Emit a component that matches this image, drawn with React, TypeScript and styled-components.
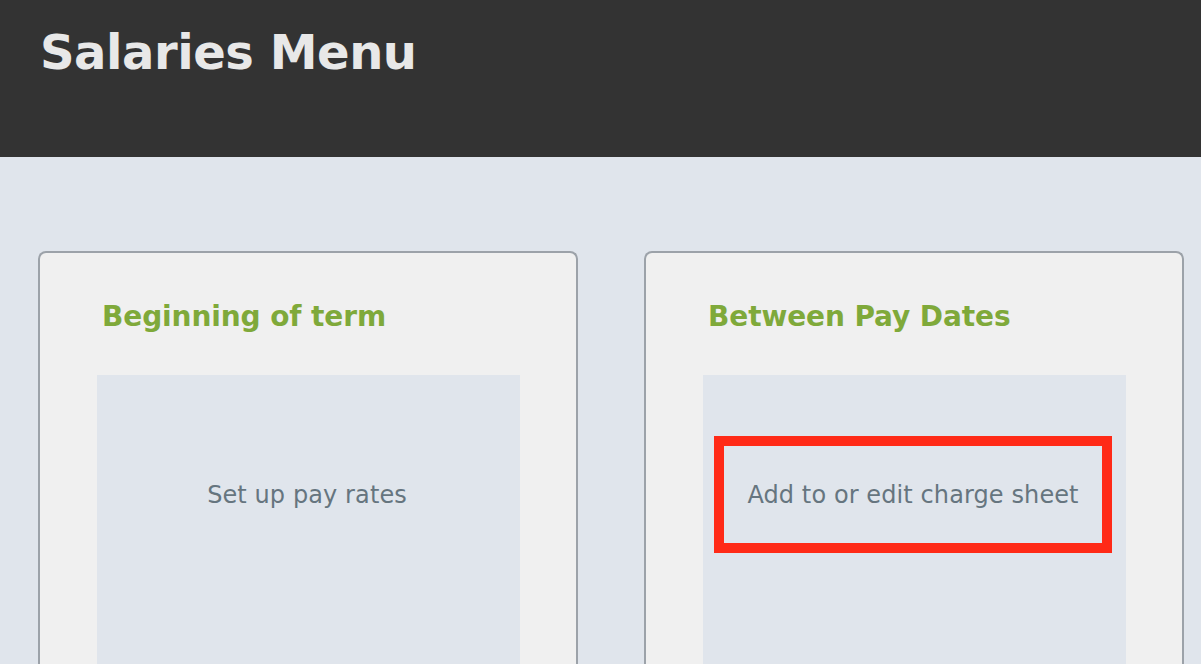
import styled, { createGlobalStyle } from 'styled-components';

const GlobalStyle = createGlobalStyle`
  html, body {
    margin: 0;
    padding: 0;
    background: #e0e5ec;
    font-family: "DejaVu Sans", Verdana, sans-serif;
  }
`;

const Header = styled.header`
  height: 157px;
  background: #333333;
  box-sizing: border-box;
  padding: 20px 0 0 40px;
`;

const Title = styled.h1`
  margin: 0;
  color: #e8e8e8;
  font-size: 48px;
  font-weight: bold;
  letter-spacing: -0.45px;
  line-height: 64px;
`;

const Main = styled.main`
  display: grid;
  grid-template-columns: 540px 540px;
  column-gap: 66px;
  padding: 94px 0 0 38px;
`;

const Card = styled.section`
  background: #f0f0f0;
  border: 2px solid #9ca2a9;
  border-bottom: none;
  border-radius: 8px 8px 0 0;
  height: 440px;
  box-sizing: border-box;
  padding: 43px 56px 0 57px;
`;

const CardTitle = styled.h2`
  margin: 0 0 37px 5px;
  color: #7fa93a;
  font-size: 28px;
  font-weight: bold;
  letter-spacing: -0.1px;
  line-height: 42px;
`;

const Panel = styled.div`
  background: #e0e5ec;
  height: 400px;
  padding: 61px 14px 0 11px;
  box-sizing: border-box;
`;

const Item = styled.div<{ $highlight?: boolean }>`
  height: 117px;
  box-sizing: border-box;
  display: flex;
  align-items: center;
  justify-content: center;
  border: 10px solid ${p => (p.$highlight ? '#ff2a17' : 'transparent')};
  color: #66757f;
  font-size: 24px;
  letter-spacing: 0.1px;
`;

const sections = [
  { title: 'Beginning of term', items: ['Set up pay rates'], highlight: -1 },
  { title: 'Between Pay Dates', items: ['Add to or edit charge sheet'], highlight: 0 },
];

export default function App() {
  return (
    <>
      <GlobalStyle />
      <Header>
        <Title>Salaries Menu</Title>
      </Header>
      <Main>
        {sections.map(s => (
          <Card key={s.title}>
            <CardTitle>{s.title}</CardTitle>
            <Panel>
              {s.items.map((item, i) => (
                <Item key={item} $highlight={i === s.highlight}>
                  {item}
                </Item>
              ))}
            </Panel>
          </Card>
        ))}
      </Main>
    </>
  );
}
